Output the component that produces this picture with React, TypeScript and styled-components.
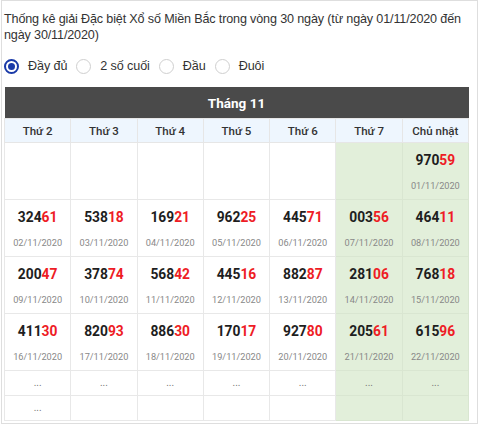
import React from "react";
import styled, { createGlobalStyle } from "styled-components";

const Global = createGlobalStyle`
  html, body { margin: 0; padding: 0; background: #fff; }
  body { font-family: "Liberation Sans", Arial, sans-serif; }
`;

const Frame = styled.div`
  box-sizing: border-box;
  width: 477px;
  height: 424px;
  margin-left: 1px;
  border: 1px solid #dedede;
  padding: 10px 7px 0 2px;
  overflow: hidden;
`;

const Title = styled.p`
  margin: 0;
  font-size: 12.6px;
  letter-spacing: -0.15px;
  line-height: 16px;
  color: #333;
`;

const RadioRow = styled.div`
  display: flex;
  align-items: center;
  height: 20px;
  margin-top: 13px;
  margin-bottom: 11px;
`;

const RadioItem = styled.label`
  display: flex;
  align-items: center;
  font-size: 12.6px;
  letter-spacing: -0.1px;
  color: #333;
  margin-right: 9px;
`;

const Circle = styled.span<{ $on?: boolean }>`
  box-sizing: border-box;
  width: 15px;
  height: 15px;
  border-radius: 50%;
  margin: 0 9px 0 0;
  border: ${(p) => (p.$on ? "2px solid #1a3aa8" : "1px solid #cfcfcf")};
  display: flex;
  align-items: center;
  justify-content: center;
  background: #fff;
  &::after {
    content: "";
    display: ${(p) => (p.$on ? "block" : "none")};
    width: 7px;
    height: 7px;
    border-radius: 50%;
    background: #1a3aa8;
  }
`;

const Table = styled.table`
  width: 465px;
  border-collapse: collapse;
  table-layout: fixed;
  font-family: Roboto, "Liberation Sans", sans-serif;
`;

const MonthCell = styled.th`
  background: #4a4a4a;
  color: #fff;
  font-size: 13.5px;
  font-weight: 700;
  height: 31px;
  padding: 0;
  text-align: center;
`;

const DayHead = styled.th`
  background: #eef6fe;
  color: #333;
  font-size: 11.5px;
  font-weight: 500;
  height: 23px;
  padding: 0;
  border: 1px solid #e6e6e6;
  text-align: center;
`;

const Cell = styled.td<{ $weekend?: boolean; $short?: boolean }>`
  background: ${(p) => (p.$weekend ? "#e2efda" : "#fff")};
  border: 1px solid ${(p) => (p.$weekend ? "#d9e6d1" : "#e8e8e8")};
  height: ${(p) => (p.$short ? "24px" : "56px")};
  padding: 0;
  text-align: center;
  vertical-align: top;
`;

const Num = styled.div`
  font-size: 13.8px;
  font-weight: 700;
  color: #1e1e1e;
  line-height: 16px;
  margin-top: 9px;
`;

const Red = styled.span`
  color: #ee1c25;
`;

const DateText = styled.div`
  font-size: 9.2px;
  color: #888;
  line-height: 12px;
  margin-top: 12px;
`;

const Dots = styled.div`
  font-size: 10px;
  color: #777;
  line-height: 24px;
`;

type Entry = { n: string; d: string } | null;

const rows: Entry[][] = [
  [null, null, null, null, null, null, { n: "97059", d: "01/11/2020" }],
  [
    { n: "32461", d: "02/11/2020" },
    { n: "53818", d: "03/11/2020" },
    { n: "16921", d: "04/11/2020" },
    { n: "96225", d: "05/11/2020" },
    { n: "44571", d: "06/11/2020" },
    { n: "00356", d: "07/11/2020" },
    { n: "46411", d: "08/11/2020" },
  ],
  [
    { n: "20047", d: "09/11/2020" },
    { n: "37874", d: "10/11/2020" },
    { n: "56842", d: "11/11/2020" },
    { n: "44516", d: "12/11/2020" },
    { n: "88287", d: "13/11/2020" },
    { n: "28106", d: "14/11/2020" },
    { n: "76818", d: "15/11/2020" },
  ],
  [
    { n: "41130", d: "16/11/2020" },
    { n: "82093", d: "17/11/2020" },
    { n: "88630", d: "18/11/2020" },
    { n: "17017", d: "19/11/2020" },
    { n: "92780", d: "20/11/2020" },
    { n: "20561", d: "21/11/2020" },
    { n: "61596", d: "22/11/2020" },
  ],
];

const days = ["Thứ 2", "Thứ 3", "Thứ 4", "Thứ 5", "Thứ 6", "Thứ 7", "Chủ nhật"];
const radios = ["Đầy đủ", "2 số cuối", "Đầu", "Đuôi"];

export default function App() {
  return (
    <>
      <Global />
      <Frame>
        <Title>
          Thống kê giải Đặc biệt Xổ số Miền Bắc trong vòng 30 ngày (từ ngày 01/11/2020 đến ngày 30/11/2020)
        </Title>
        <RadioRow>
          {radios.map((r, i) => (
            <RadioItem key={r}>
              <Circle $on={i === 0} />
              {r}
            </RadioItem>
          ))}
        </RadioRow>
        <Table>
          <thead>
            <tr>
              <MonthCell colSpan={7}>Tháng 11</MonthCell>
            </tr>
            <tr>
              {days.map((d) => (
                <DayHead key={d}>{d}</DayHead>
              ))}
            </tr>
          </thead>
          <tbody>
            {rows.map((row, ri) => (
              <tr key={ri}>
                {row.map((e, ci) => (
                  <Cell key={ci} $weekend={ci >= 5}>
                    {e && (
                      <>
                        <Num>
                          {e.n.slice(0, 3)}
                          <Red>{e.n.slice(3)}</Red>
                        </Num>
                        <DateText>{e.d}</DateText>
                      </>
                    )}
                  </Cell>
                ))}
              </tr>
            ))}
            <tr>
              {days.map((_, ci) => (
                <Cell key={ci} $weekend={ci >= 5} $short>
                  <Dots>...</Dots>
                </Cell>
              ))}
            </tr>
            <tr>
              {days.map((_, ci) => (
                <Cell key={ci} $weekend={ci >= 5} $short>
                  {ci === 0 && <Dots>...</Dots>}
                </Cell>
              ))}
            </tr>
          </tbody>
        </Table>
      </Frame>
    </>
  );
}
